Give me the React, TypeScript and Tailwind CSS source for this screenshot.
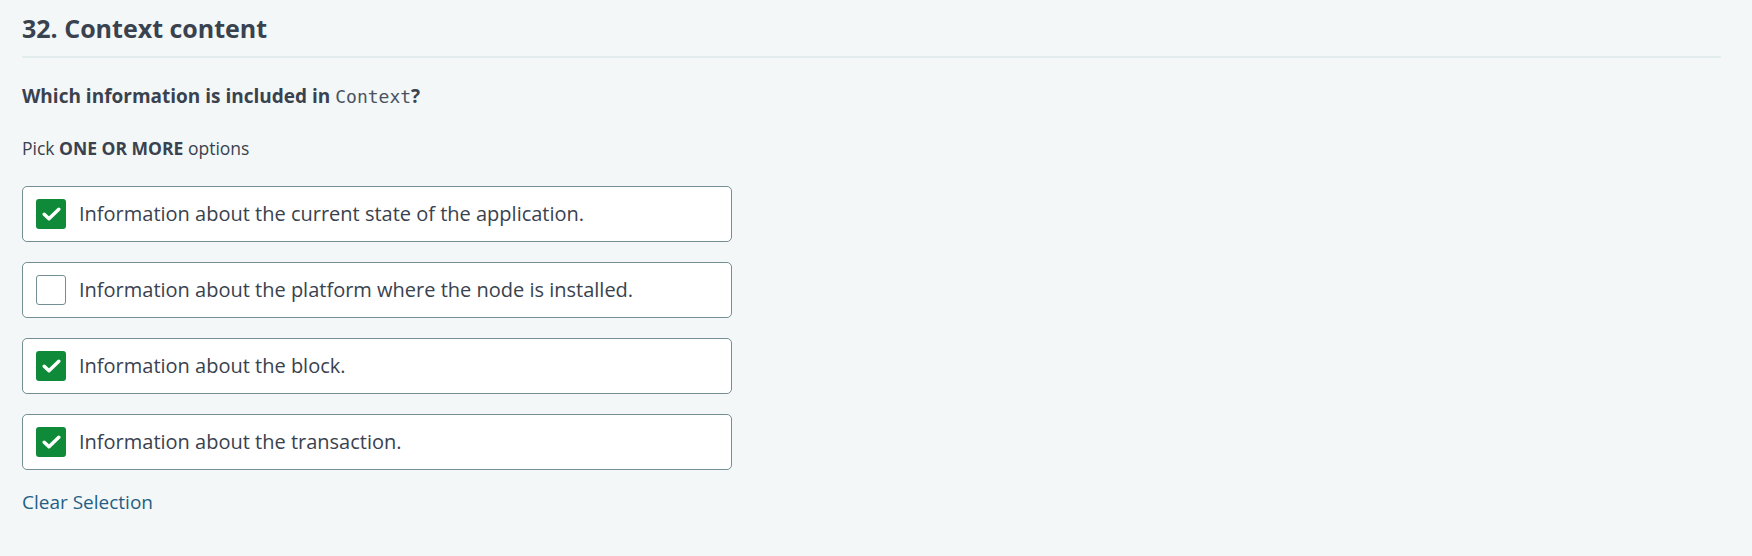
import React from "react";

const options = [
  { text: "Information about the current state of the application.", checked: true },
  { text: "Information about the platform where the node is installed.", checked: false },
  { text: "Information about the block.", checked: true },
  { text: "Information about the transaction.", checked: true },
];

function Check({ checked }: { checked: boolean }) {
  if (checked) {
    return (
      <div className="flex h-[30px] w-[30px] shrink-0 items-center justify-center rounded-[3px] bg-[#0e8a38]">
        <svg width="19" height="14" viewBox="0 0 19 14" fill="none" stroke="white" strokeWidth="3.4" strokeLinecap="round" strokeLinejoin="round">
          <path d="M2.2 7.2l4.8 4.6L16.8 2.2" />
        </svg>
      </div>
    );
  }
  return <div className="h-[30px] w-[30px] shrink-0 rounded-[3px] border border-[#738f93] bg-white" />;
}

export default function App() {
  return (
    <div className="min-h-[556px] w-full bg-[#f3f7f7] font-['Open_Sans',sans-serif] text-[#39424e]">
      <div className="px-[22px] pt-[10px] pr-[31px]">
        <h1 className="pb-[10px] text-[25px] font-bold leading-[36px]">32. Context content</h1>
        <div className="h-[2px] w-full bg-[#e3eded]" />
        <p className="mt-[23px] text-[19px] font-bold leading-[30px]">
          Which information is included in{" "}
          <code className="font-['DejaVu_Sans_Mono',monospace] text-[18px] font-normal text-[#4a535e]">Context</code>?
        </p>
        <p className="mt-[24px] text-[17.5px] leading-[24px]">
          Pick <span className="font-bold">ONE OR MORE</span> options
        </p>
        <div className="mt-[26px] flex w-[710px] flex-col gap-[20px]">
          {options.map((o) => (
            <div key={o.text} className="flex h-[56px] items-center gap-[13px] rounded-[5px] border border-[#738f93] bg-white pl-[13px]">
              <Check checked={o.checked} />
              <span className="text-[20px] leading-[26px]">{o.text}</span>
            </div>
          ))}
        </div>
        <div className="mt-[19px] text-[19px] leading-[26px] text-[#1f5f85]">Clear Selection</div>
      </div>
    </div>
  );
}
